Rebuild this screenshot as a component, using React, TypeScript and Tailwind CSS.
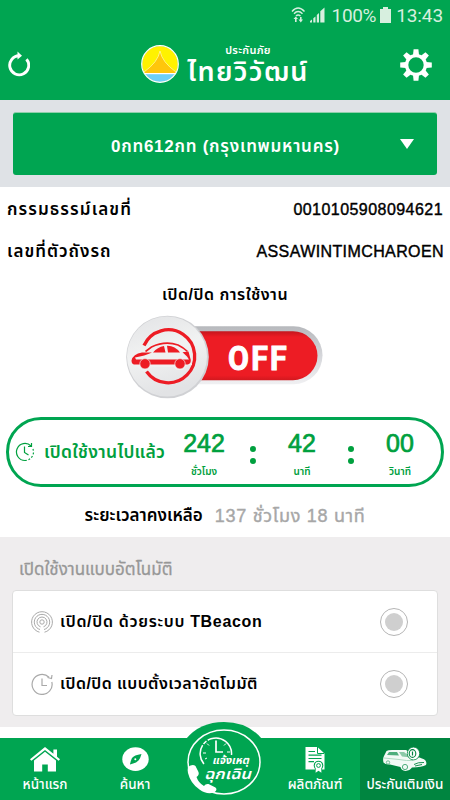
import { ReactNode } from 'react'
import clsx from 'clsx'

const tabs = [
  { id: 'home', label: 'หน้าแรก', Icon: HomeIcon },
  { id: 'search', label: 'ค้นหา', Icon: CompassIcon },
  { id: 'emergency', label: '', Icon: null },
  { id: 'products', label: 'ผลิตภัณฑ์', Icon: CertificateIcon },
  { id: 'topup', label: 'ประกันเติมเงิน', Icon: CarCoinIcon },
]

const elapsed = [
  { value: '242', unit: 'ชั่วโมง' },
  { value: '42', unit: 'นาที' },
  { value: '00', unit: 'วินาที' },
]

function HomeIcon() {
  return (
    <svg width="30" height="25" viewBox="0 0 30 25" fill="#fff">
      <path d="M15 0 L0 12.2 L1.4 13.8 L15 3 L28.6 13.8 L30 12.2 L27 9.7 V2.4 H23.4 V6.8 Z" />
      <path d="M15 4.8 L4 13.4 V24.5 H12.2 V17.5 H17.8 V24.5 H26 V13.4 Z" />
    </svg>
  )
}

function CompassIcon() {
  return (
    <svg width="27" height="25" viewBox="0 0 27 25">
      <ellipse cx="13.5" cy="12.2" rx="13.2" ry="11.9" fill="#fff" />
      <path d="M19.5 7 Q12 8 10 11 Q8.5 14 8 17.5 Q14.5 16 16.5 13.5 Q18.5 11 19.5 7Z" fill="#00a551" />
      <circle cx="13.3" cy="12.3" r="1" fill="#fff" />
    </svg>
  )
}

function CertificateIcon() {
  return (
    <svg width="20" height="26" viewBox="0 0 20 26">
      <path d="M0.5 0 H12.5 L19.5 6.5 V22.5 H0.5 Z" fill="#fff" />
      <path d="M12.5 0 V6.5 H19" fill="none" stroke="#00a551" strokeWidth="1" />
      <path d="M3.5 4.5 H10 M3.5 8.2 H16.5 M3.5 11.5 H16.5 M3.5 14.7 H9" stroke="#00a551" strokeWidth="1.2" />
      <circle cx="13.5" cy="18.5" r="4.8" fill="#00a551" />
      <path d="M10 20 L9.8 26 H17.2 L17 20Z" fill="#00a551" />
      <path d="M10.8 20 L10.6 25.8 L13.5 23.7 L16.4 25.8 L16.2 20Z" fill="#fff" />
      <circle cx="13.5" cy="18.5" r="3.7" fill="#fff" />
      <circle cx="13.5" cy="18.5" r="1.9" fill="none" stroke="#00a551" />
    </svg>
  )
}

function CarCoinIcon() {
  return (
    <svg width="46" height="25" viewBox="0 0 46 25">
      <path
        d="M4.5 4 Q6 3 10 3 L24 3 Q30 6 34.5 10 Q41 11 43.5 13.5 Q45 16 44 18 Q40 20 30 20.5 Q28 23.5 23.5 24 Q19 23.5 18.5 20 L8 17.5 Q3.5 18 1.5 15.5 Q0.5 12 2 9Z"
        fill="#f3faf6"
      />
      <path d="M7 5 H15 L17 8.5 L5 8Z" fill="#4fae7d" />
      <path d="M17 5 H22 L29 10.5 L20 9.5Z" fill="#8cc9a8" />
      <path d="M2 11 L17 12.5 Q25 14 31 13.5" fill="none" stroke="#9ed3b6" strokeWidth=".8" />
      <path d="M32 17.5 Q36 15 42 15.5 M33 19 L40 17.5" fill="none" stroke="#008540" strokeWidth=".9" />
      <circle cx="23" cy="20" r="2.6" fill="none" stroke="#4fae7d" strokeWidth="1" />
      <circle cx="6" cy="15.5" r="1.7" fill="none" stroke="#4fae7d" strokeWidth=".8" />
      <ellipse cx="31.5" cy="6.5" rx="6.2" ry="6.4" fill="#fff" stroke="#008540" strokeWidth=".8" />
      <ellipse cx="30.5" cy="6.5" rx="3.3" ry="3.9" fill="none" stroke="#008540" strokeWidth="1.1" />
      <path d="M30.5 4.5 V8.5" stroke="#008540" strokeWidth="1.2" />
    </svg>
  )
}

function GearIcon() {
  return (
    <svg width="32" height="32" viewBox="0 0 32 32" className="mt-0.5">
      <g fill="#fff">
        {[0, 45, 90, 135, 180, 225, 270, 315].map((angle) => (
          <path key={angle} d="M13 6 L13.6 0.2 H18.4 L19 6Z" transform={`rotate(${angle} 16 16)`} />
        ))}
      </g>
      <circle cx="16" cy="16" r="9.4" fill="none" stroke="#fff" strokeWidth="3.4" />
    </svg>
  )
}

function RefreshIcon() {
  return (
    <svg width="22" height="26" viewBox="0 0 22 26">
      <path d="M18.5 8.2 A9.5 9.5 0 1 1 11 4.8" fill="none" stroke="#fff" strokeWidth="2.9" />
      <path d="M9.5 0.5 L14 4.7 L9.5 8.5Z" fill="#fff" />
    </svg>
  )
}

function StatusBar() {
  return (
    <div className="flex h-[30px] items-center justify-end pr-[7px] text-[#d7efdf]">
      <svg width="35" height="18" viewBox="0 0 35 18" className="mr-1.5">
        <g fill="none" stroke="#d7efdf" strokeWidth="1.4">
          <path d="M1 5.5 Q7 -1.5 13.5 5.5" />
          <path d="M3 7.8 Q7 3.3 11.5 7.8" />
          <path d="M5 10 Q7 7.8 9.5 10" />
        </g>
        <path d="M4.8 10.5 L7 13 H5.6 V16 H4 V13 H2.5Z M9.8 16.5 L12 13.5 H10.6 V11 H9 V13.5 H7.5Z" fill="#d7efdf" />
        <path d="M19 16.5 V15 L21 13.5 V16.5Z M22.3 16.5 V12.3 L24.5 10.5 V16.5Z M25.8 16.5 V9 L28 7 V16.5Z M29.3 16.5 V5.3 L33.5 1.5 V16.5Z" fill="#d7efdf" />
      </svg>
      <span className="font-[Roboto] text-[19px] leading-none tracking-[-0.35px]">100%</span>
      <svg width="11" height="16" viewBox="0 0 11 16" className="mr-[5px] ml-[4px]">
        <path d="M3 0 H8 V2 H11 V16 H0 V2 H3Z" fill="#d7efdf" />
      </svg>
      <span className="font-[Roboto] text-[19px] leading-none tracking-[-0.1px]">13:43</span>
    </div>
  )
}

function Header() {
  return (
    <header className="h-[100px] bg-[#00a551]">
      <StatusBar />
      <div className="flex h-[69px] items-center justify-between pr-[18px] pb-0.5 pl-2">
        <RefreshIcon />
        <div className="ml-[20px] flex items-center gap-[8px]">
          <svg width="38" height="40" viewBox="0 0 38 40">
            <defs>
              <clipPath id="logo">
                <circle cx="19" cy="20" r="18" />
              </clipPath>
            </defs>
            <g clipPath="url(#logo)">
              <rect width="38" height="40" fill="#fff200" />
              <path d="M19 7 Q17 18 3 28 V30 H35 V28 Q21 18 19 7Z" fill="#ffc60b" />
              <path d="M19 7 Q17 18 3 28 M19 7 Q21 18 35 28" fill="none" stroke="#fff9a0" strokeWidth=".8" />
              <rect y="29.5" width="38" height="11" fill="#6dcff6" />
              <rect y="29" width="38" height="1.2" fill="#fff" />
            </g>
            <circle cx="19" cy="20" r="18.3" fill="none" stroke="#fff" strokeWidth="1.2" />
          </svg>
          <div className="flex w-[123px] flex-col items-center pt-1 text-white">
            <span className="text-[11px] leading-[13px] font-semibold tracking-[0.3px] whitespace-nowrap">ประกันภัย</span>
            <span className="text-[27px] leading-[31px] font-semibold tracking-[1.4px] whitespace-nowrap">ไทยวิวัฒน์</span>
          </div>
        </div>
        <GearIcon />
      </div>
    </header>
  )
}

function PowerSwitch() {
  return (
    <svg width="200" height="88" viewBox="0 0 200 88" className="block">
      <defs>
        <linearGradient id="rim" x2="0" y2="1">
          <stop offset="0" stopColor="#b7b9bd" />
          <stop offset=".5" stopColor="#d5d6da" />
          <stop offset="1" stopColor="#f0f0f2" />
        </linearGradient>
        <linearGradient id="knob" x2="0.3" y2="1">
          <stop offset="0" stopColor="#e2e3e5" />
          <stop offset=".5" stopColor="#f1f2f2" />
          <stop offset="1" stopColor="#e2e3e5" />
        </linearGradient>
        <linearGradient id="red" x2="0" y2="1">
          <stop offset="0" stopColor="#c4161d" />
          <stop offset=".12" stopColor="#ed1c24" />
          <stop offset=".9" stopColor="#ed1c24" />
          <stop offset="1" stopColor="#d2181f" />
        </linearGradient>
      </defs>
      <path d="M50 12.3 H168.5 A29 29 0 0 1 168.5 70.3 H50Z" fill="url(#rim)" />
      <path d="M50 17.2 H168 A24.5 24.5 0 0 1 168 66.2 H50Z" fill="url(#red)" />
      <circle cx="42.5" cy="43" r="41.3" fill="#d0d1d4" />
      <circle cx="42" cy="42.5" r="40" fill="url(#knob)" />
      <path d="M19 31.5 A26.5 26.5 0 1 1 21.5 57.5" fill="none" stroke="#ed1c24" strokeWidth="3.3" />
      {/* car body sits over the ring */}
      <path d="M5 48 L7 41 L19 36.5 L26 31 Q40 25.5 54 30 L65 37.5 L67 51 H62 L58 56 H52 L48 53 H27 L22 56.5 H17Z" fill="#f0f0f1" />
      <path d="M20.5 37.5 L26.5 33 Q40 26.5 53 31 Q59 34 62.5 37.5" fill="none" stroke="#ed1c24" strokeWidth="1.6" />
      <path d="M28 38.6 Q32.5 33 39 32 L40.5 38.6Z M42 31.8 Q50 31.5 55 38.6 H43Z" fill="#ed1c24" />
      <path d="M6.5 46.5 Q8 40 17 38.5 L27 38.6 Q20 42 10 43.5 L11 45.5 H64 L62 42.5 L57.5 38.3 L63.5 37.6 L65.8 46 Q66 49.5 63 50.5 H9 Q6.5 50 6.5 46.5Z" fill="#ed1c24" />
      <circle cx="20" cy="49.8" r="5.2" fill="#ed1c24" stroke="#f1f2f2" strokeWidth=".7" />
      <circle cx="55" cy="49.8" r="5.2" fill="#ed1c24" stroke="#f1f2f2" strokeWidth=".7" />
      <text
        x="103"
        y="55.6"
        fill="#fff"
        stroke="#fff"
        strokeWidth="1"
        fontFamily="Roboto"
        fontWeight="700"
        fontSize="33.5"
        letterSpacing="2.5"
        textLength="61"
        lengthAdjust="spacingAndGlyphs"
      >
        OFF
      </text>
    </svg>
  )
}

function AutoRow({ icon, label, last }: { icon: ReactNode; label: ReactNode; last?: boolean }) {
  return (
    <div className={clsx('flex h-[62px] items-center pr-[29px] pl-[18px]', !last && 'border-b border-[#ececec]')}>
      <div className="mr-[7px] w-[22px]">{icon}</div>
      <div className="flex-1 text-[16px] font-semibold whitespace-nowrap text-black">{label}</div>
      <div className="flex size-7 items-center justify-center rounded-full border border-[#b5b5b5]">
        <div className="size-[18px] rounded-full bg-[#cfcfcf]" />
      </div>
    </div>
  )
}

function BottomNav() {
  return (
    <nav className="relative flex h-[62px] bg-[#00a551]">
      {tabs.map(({ id, label, Icon }) => (
        <div
          key={id}
          className={clsx('flex w-[90px] flex-col items-center pt-[9px]', id === 'topup' && 'bg-[#008540]')}
        >
          {Icon && (
            <div className="flex h-[28px] items-start">
              <Icon />
            </div>
          )}
          <span className="text-[13.5px] leading-[20px] font-medium whitespace-nowrap text-white">{label}</span>
        </div>
      ))}
      <svg width="90" height="78" viewBox="0 0 90 78" className="absolute top-[-16px] left-[180px]">
        <path d="M6 17 Q20 0 44 0 Q68 0 82 17 V78 H6Z" fill="#00a551" />
        <ellipse cx="44" cy="40" rx="36" ry="32" fill="none" stroke="#fff" strokeWidth="1.5" />
        <path d="M24 42 A15.7 15.7 0 1 1 51.5 33" fill="none" stroke="#fff" strokeWidth="1.5" strokeDasharray="20 1.5 4 1.5 60" />
        <path d="M36 18.5 V30 H43" fill="none" stroke="#fff" strokeWidth="1.7" />
        <path d="M23 31 H26 M47 30 H50 M27 21.5 L29 23.5 M46 21.5 L44 23.5 M25 37 L27 36" stroke="#fff" />
        <text x="32" y="41.5" fill="#fff" fontSize="11" fontWeight="700" fontStyle="italic" textLength="37" lengthAdjust="spacingAndGlyphs">
          แจ้งเหตุ
        </text>
        <text x="24" y="56.5" fill="#fff" fontSize="14.5" fontWeight="600" fontStyle="italic" textLength="47" lengthAdjust="spacingAndGlyphs">
          ฉุกเฉิน
        </text>
        <path d="M10.5 43.5 Q6.5 45 8 51 Q10.5 61.5 19.5 67.5 Q27 73 34 70.5 Q38 68 35.5 65.5 L28.5 62 Q25.5 61.5 24 64 Q18.5 61 16.5 55 Q19.5 53 18.5 50 L15.5 44 Q13.5 42.3 10.5 43.5Z" fill="#fff" />
      </svg>
    </nav>
  )
}

export default function App() {
  return (
    <div className="h-[800px] w-[450px] overflow-hidden bg-white font-['Liberation_Sans','Noto_Sans_Thai',sans-serif]">
      <Header />

      <div className="h-[87px] bg-[#dfe2e6] px-[13px] pt-[12px]">
        <button className="flex h-[63px] w-full items-center justify-between rounded-[3px] border-t border-[#8fcfab] bg-[#00a551] pr-[23px] text-white">
          <span className="mt-1.5 ml-[98px] text-[17px] font-semibold tracking-[0.75px] whitespace-nowrap">0กท612กท (กรุงเทพมหานคร)</span>
          <svg width="14" height="10" viewBox="0 0 14 10">
            <path d="M0 0 H14 L7 10Z" fill="#fff" />
          </svg>
        </button>
      </div>

      <div className="flex h-[43px] items-center justify-between px-[7px] pt-0.5">
        <span className="text-[17px] font-semibold tracking-[1.1px]">กรรมธรรม์เลขที่</span>
        <span className="text-[16px] tracking-[0.45px] [-webkit-text-stroke:0.4px_#000]">0010105908094621</span>
      </div>
      <div className="flex h-[42px] items-center justify-between pt-0.5 pr-[6px] pl-[7px]">
        <span className="text-[17px] font-semibold tracking-[1px]">เลขที่ตัวถังรถ</span>
        <span className="text-[16px] tracking-[0.4px] [-webkit-text-stroke:0.4px_#000]">ASSAWINTIMCHAROEN</span>
      </div>

      <div className="flex h-[42px] items-center justify-center pt-1 text-[16px] font-semibold tracking-[0.5px]">เปิด/ปิด การใช้งาน</div>
      <div className="h-[103px] pl-[125px]">
        <PowerSwitch />
      </div>

      <div className="mx-[6px] flex h-[70px] items-center rounded-full border-[3px] border-[#00a551] text-[#00a03e]">
        <svg width="20" height="20" viewBox="0 0 20 20" className="mr-[9px] ml-[6px] shrink-0" fill="none" stroke="#00a03e" strokeWidth="1.2">
          <path d="M16 4 A8.5 8.5 0 1 0 10 18.5" />
          <path d="M10 18.5 A8.5 8.5 0 0 0 17.5 6" strokeDasharray="1.8 1.8" />
          <path d="M13 4.5 H16.5 V1" />
          <path d="M9.5 4.5 V10.5 L13.5 13" />
        </svg>
        <span className="w-[118px] shrink-0 text-[17.5px] font-semibold tracking-[0.3px] whitespace-nowrap">เปิดใช้งานไปแล้ว</span>
        {elapsed.map(({ value, unit }, i) => (
          <div key={unit} className="flex shrink-0 items-center">
            {i > 0 && (
              <div className="flex w-[14px] flex-col items-center gap-[6px] pt-1.5">
                <div className="size-[6px] rounded-full bg-[#00a03e]" />
                <div className="size-[6px] rounded-full bg-[#00a03e]" />
              </div>
            )}
            <div className="flex w-[84px] flex-col items-center pt-[4px]">
              <span className="text-[25px] leading-[28px] [-webkit-text-stroke:0.7px_#00a03e]">{value}</span>
              <span className="mt-2 text-[10px] leading-[14px] font-semibold">{unit}</span>
            </div>
          </div>
        ))}
      </div>

      <div className="flex h-[50px] items-center justify-center gap-3 pt-2">
        <span className="text-[17px] font-semibold">ระยะเวลาคงเหลือ</span>
        <span className="text-[18px] tracking-[0.7px] text-[#a7a7a7] [-webkit-text-stroke:0.4px_#a7a7a7]">137 ชั่วโมง 18 นาที</span>
      </div>

      <section className="h-[190px] bg-[#efedee] px-3">
        <div className="flex h-[53px] items-center pt-3 pl-[7px] text-[17px] text-[#979797] [-webkit-text-stroke:0.3px_#979797]">
          เปิดใช้งานแบบอัตโนมัติ
        </div>
        <div className="w-[426px] rounded-[4px] border border-[#dedede] bg-white">
          <AutoRow
            label={<span className="tracking-[0.68px]">เปิด/ปิด ด้วยระบบ TBeacon</span>}
            icon={
              <svg width="22" height="22" viewBox="0 0 22 22" fill="none" stroke="#a9a9a9" strokeWidth="1">
                <circle cx="11" cy="11" r="2.2" />
                <path d="M9.5 15.8 A5 5 0 1 1 12.5 15.8" />
                <path d="M9 18.5 A7.7 7.7 0 1 1 13 18.5" />
                <path d="M8.5 21.2 A10.4 10.4 0 1 1 13.5 21.2" />
              </svg>
            }
          />
          <AutoRow
            last
            label={<span className="tracking-[0.45px]">เปิด/ปิด แบบตั้งเวลาอัตโมมัติ</span>}
            icon={
              <svg width="22" height="22" viewBox="0 0 22 22" fill="none" stroke="#a9a9a9" strokeWidth="1.2">
                <path d="M18 4.2 A10 10 0 1 0 20.8 9" />
                <path d="M16.5 4.5 L20.5 5.5 L21 2" />
                <path d="M11 5.5 V12.5 H16" />
              </svg>
            }
          />
        </div>
      </section>

      <div className="h-[11px]" />
      <BottomNav />
    </div>
  )
}
